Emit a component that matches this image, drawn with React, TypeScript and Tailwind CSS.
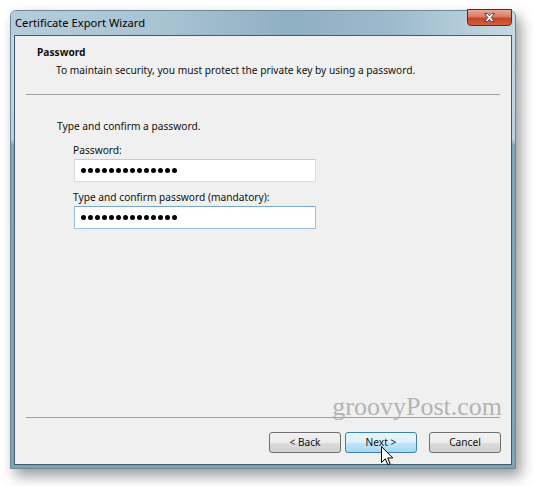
import React from 'react'

const DOTS = Array.from({ length: 14 })

function PasswordBox({ focused }: { focused?: boolean }) {
  return (
    <div
      className={
        focused
          ? 'ml-[59px] flex h-[23px] w-[242px] items-center gap-[2px] border border-[#9dc1e2] border-t-[#7aa7d0] bg-white pl-[6px]'
          : 'ml-[59px] flex h-[23px] w-[242px] items-center gap-[2px] border border-[#dcdee3] border-t-[#c9cbd1] bg-white pl-[6px]'
      }
    >
      {DOTS.map((_, i) => (
        <span key={i} className="h-[5px] w-[5px] rounded-full bg-black" />
      ))}
    </div>
  )
}

function WinButton({ label, hot }: { label: string; hot?: boolean }) {
  return (
    <div
      className={
        hot
          ? 'flex h-[21px] w-[72px] items-center justify-center rounded-[3px] border border-[#3c7fb1] bg-[linear-gradient(to_bottom,#eaf6fd_0%,#d9f0fc_50%,#bee6fd_50%,#a7d9f5_100%)] leading-none'
          : 'flex h-[21px] w-[72px] items-center justify-center rounded-[3px] border border-[#707070] bg-[linear-gradient(to_bottom,#f2f2f2_0%,#ebebeb_50%,#dddddd_50%,#cfcfcf_100%)] leading-none'
      }
    >
      {label}
    </div>
  )
}

export default function App() {
  return (
    <div className="relative h-[486px] w-[534px] overflow-hidden bg-white font-['Noto_Sans',sans-serif] text-[10.2px] text-[#111]">
      <div className="relative ml-[10px] mt-[10px] flex h-[459px] w-[506px] flex-col rounded-t-[6px] border border-[#6d8796] bg-[linear-gradient(to_bottom,#c4d9e4_0px,#bcd3df_128px,#82a6b9_134px,#7ea3b6_100%)] shadow-[5px_7px_14px_rgba(0,0,0,0.4)]">
        {/* title bar */}
        <div className="flex h-[24px] items-center rounded-t-[5px] bg-[linear-gradient(to_right,#b5cddb_0%,#a9c3d2_30%,#8fb0c2_55%,#9cbacb_75%,#c5d9e3_100%)] pl-[4px]">
          <span className="text-[11.2px] leading-none text-black">Certificate Export Wizard</span>
        </div>
        <div className="absolute right-[3px] top-[-2px] flex h-[17px] w-[45px] items-center justify-center rounded-b-[4px] border border-[#6b2419] bg-[linear-gradient(to_bottom,#e9a796_0%,#db7a62_45%,#c6452c_55%,#d2603f_100%)]">
          <svg width="13" height="11" viewBox="0 0 13 11" aria-hidden="true">
            <path
              d="M1.5 1.5h3l2 2.3 2-2.3h3l-3.4 4 3.4 4h-3l-2-2.3-2 2.3h-3l3.4-4z"
              fill="#ffffff"
              stroke="#4a4a4a"
              strokeWidth="1"
              strokeLinejoin="round"
            />
          </svg>
        </div>

        {/* client area */}
        <div className="relative mx-[3px] mb-[3px] flex flex-1 flex-col border border-[#3f5c6b] bg-[#f0f0f0]">
          <div className="pl-[22px] pt-[8px]">
            <p className="font-bold leading-[16px]">Password</p>
            <p className="mt-[2px] pl-[19px] leading-[16px]">
              To maintain security, you must protect the private key by using a password.
            </p>
          </div>
          <div className="mx-[11px] mt-[16px] h-px bg-[#a0a0a0]" />

          <p className="mt-[23px] pl-[42px] leading-[16px]">Type and confirm a password.</p>
          <p className="mt-[8px] pl-[58px] leading-[16px]">Password:</p>
          <div className="mt-px">
            <PasswordBox />
          </div>
          <p className="mt-[7px] pl-[58px] leading-[16px]">Type and confirm password (mandatory):</p>
          <div className="mt-px">
            <PasswordBox focused />
          </div>

          <div className="flex-1" />
          <div className="mx-[11px] h-px bg-[#a0a0a0]" />
          <div className="mt-[14px] flex justify-end pb-[11px] pr-[10px]">
            <WinButton label="< Back" />
            <div className="ml-[4px]">
              <WinButton label="Next >" hot />
            </div>
            <div className="ml-[12px]">
              <WinButton label="Cancel" />
            </div>
          </div>

          <span className="absolute right-[9px] top-[358px] font-['Liberation_Serif',serif] text-[26px] leading-[26px] text-[#b4b4b4]">
            groovyPost.com
          </span>
        </div>
      </div>

      {/* mouse pointer over Next */}
      <svg
        className="absolute left-[381px] top-[446px]"
        width="13"
        height="20"
        viewBox="0 0 13 20"
        aria-hidden="true"
      >
        <path
          d="M0.5 0.5V16.5L4.3 12.8L6.8 18.7L9.1 17.7L6.7 12H11.8Z"
          fill="#ffffff"
          stroke="#000000"
          strokeWidth="1"
          strokeLinejoin="round"
        />
      </svg>
    </div>
  )
}
